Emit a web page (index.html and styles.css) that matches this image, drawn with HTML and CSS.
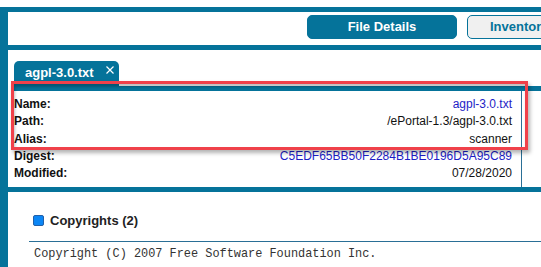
FILE: index.html
```html
<!DOCTYPE html>
<html lang="en">
<head>
    <meta charset="UTF-8">
    <title>File Details - agpl-3.0.txt</title>
    <link rel="stylesheet" href="styles.css">
</head>
<body>
<div class="frame">
    <div class="toolbar">
        <button class="btn btn-active">File Details</button>
        <button class="btn btn-wide">Inventory</button>
    </div>

    <div class="file-pane">
        <div class="tabs">
            <div class="tab">
                agpl-3.0.txt
                <svg class="tab-close" width="8" height="8" viewBox="0 0 8 8" stroke="#fff" stroke-width="1.2">
                    <path d="M0.5 0.5L7.5 7.5M7.5 0.5L0.5 7.5"/>
                </svg>
            </div>
        </div>
        <div class="details">
            <div class="row"><span class="label">Name:</span><span class="value link">agpl-3.0.txt</span></div>
            <div class="row"><span class="label">Path:</span><span class="value">/ePortal-1.3/agpl-3.0.txt</span></div>
            <div class="row"><span class="label">Alias:</span><span class="value">scanner</span></div>
            <div class="row"><span class="label">Digest:</span><span class="value link">C5EDF65BB50F2284B1BE0196D5A95C89</span></div>
            <div class="row"><span class="label">Modified:</span><span class="value">07/28/2020</span></div>
        </div>
    </div>

    <div class="copyrights">
        <div class="section-head">
            <span class="check"></span>
            <span>Copyrights (2)</span>
        </div>
        <pre class="code">Copyright (C) 2007 Free Software Foundation Inc.</pre>
    </div>
</div>

<!-- annotation box drawn over the details -->
<div class="highlight"></div>
</body>
</html>
```

FILE: styles.css
```css
:root {
    --teal: #05739a;
    --teal-line: #2a6f96;
    --link: #1d1dc6;
}

* {
    margin: 0;
    padding: 0;
    box-sizing: border-box;
}

body {
    font-family: 'Liberation Sans', Arial, sans-serif;
    color: #111;
    background: #fff;
    overflow: hidden;
    position: relative;
}

.frame {
    margin-top: 7px;
    width: 760px;
    min-height: 260px;
    border-top: 5px solid var(--teal);
    border-left: 8px solid var(--teal);
}

.toolbar {
    height: 38px;
    display: flex;
    align-items: center;
    gap: 10px;
    padding-left: 299px;
    padding-bottom: 4px;
    border-bottom: 5px solid var(--teal);
}

.btn {
    width: 150px;
    height: 24px;
    border: 1px solid var(--teal);
    border-radius: 5px;
    background: #f0f0f0;
    color: var(--teal);
    font-family: inherit;
    font-size: 13px;
    font-weight: bold;
}

.btn-wide {
    width: auto;
    padding: 0 23px 0 22px;
}

.btn-active {
    background: var(--teal);
    color: #fff;
}

.file-pane {
    width: 514px;
    padding: 11px 0 0 6px;
}

.tabs {
    border-bottom: 5px solid var(--teal);
    margin-right: -230px;
}

.tab {
    position: relative;
    width: 105px;
    height: 25px;
    padding-left: 11px;
    line-height: 24px;
    background: var(--teal);
    border-radius: 5px 5px 0 0;
    color: #fff;
    font-size: 13px;
    font-weight: bold;
}

.tab-close {
    position: absolute;
    top: 5px;
    right: 5px;
}

.details {
    padding: 5px 9px 5px 0;
    border-right: 1px solid var(--teal-line);
    font-size: 12px;
}

.row {
    display: flex;
    justify-content: space-between;
    height: 17.25px;
    line-height: 17px;
}

.label {
    font-weight: bold;
}

.value.link {
    color: var(--link);
}

.copyrights {
    border-top: 5px solid var(--teal);
    padding: 20px 0 0 21px;
}

.section-head {
    display: flex;
    align-items: center;
    gap: 6px;
    height: 17px;
    padding-left: 4px;
    margin-bottom: 12px;
    font-size: 13px;
    font-weight: bold;
    color: #222;
}

.check {
    width: 11px;
    height: 11px;
    background: #0b86f5;
    border: 1px solid #2360a8;
    border-radius: 2px;
}

.code {
    border-top: 1px solid var(--teal-line);
    padding: 4px 0 0 5px;
    font-family: 'Liberation Mono', 'DejaVu Sans Mono', monospace;
    font-size: 11.9px;
    line-height: 16px;
    color: #333;
}

.highlight {
    position: absolute;
    left: 11px;
    top: 81px;
    width: 517px;
    height: 69px;
    border: 3px solid #f0414a;
    box-shadow: 2px 3px 4px rgba(0, 0, 0, 0.3), inset 1px 3px 3px rgba(0, 0, 0, 0.25);
    pointer-events: none;
}
```
